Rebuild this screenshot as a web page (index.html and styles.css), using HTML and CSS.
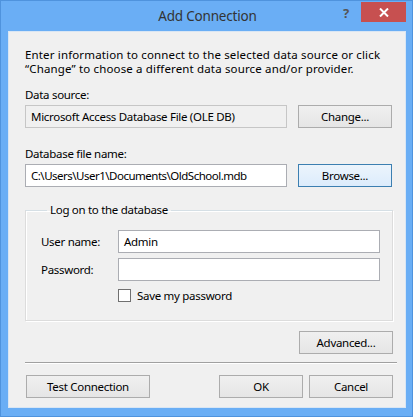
FILE: index.html
```html
<!DOCTYPE html>
<html>
<head>
<meta charset="utf-8">
<link rel="stylesheet" href="styles.css">
</head>
<body>
<div class="window">
  <div class="titlebar">
    <div class="title">Add Connection</div>
    <div class="help">?</div>
    <div class="close"><svg width="10" height="9" viewBox="0 0 10 9"><path d="M1 0.5L9 8.5M9 0.5L1 8.5" stroke="#fff" stroke-width="2"/></svg></div>
  </div>
  <div class="client">
    <p class="intro">Enter information to connect to the selected data source or click<br>“Change” to choose a different data source and/or provider.</p>
    <div class="label">Data source:</div>
    <div class="row">
      <div class="field readonly">Microsoft Access Database File (OLE DB)</div>
      <div class="btn">Change...</div>
    </div>
    <div class="label label2">Database file name:</div>
    <div class="row">
      <div class="field path">C:\Users\User1\Documents\OldSchool.mdb</div>
      <div class="btn focus">Browse...</div>
    </div>
    <fieldset class="group">
      <legend>Log on to the database</legend>
      <div class="grow">
        <span class="glabel">User name:</span>
        <div class="gfield">Admin</div>
      </div>
      <div class="grow second">
        <span class="glabel">Password:</span>
        <div class="gfield"></div>
      </div>
      <div class="check"><span class="box"></span>Save my password</div>
    </fieldset>
    <div class="advrow"><div class="btn">Advanced...</div></div>
    <div class="sep"></div>
    <div class="bottom">
      <div class="btn test">Test Connection</div>
      <div class="right">
        <div class="btn ok">OK</div>
        <div class="btn ok">Cancel</div>
      </div>
    </div>
  </div>
</div>
</body>
</html>
```
FILE: styles.css
```css
* { box-sizing: border-box; }
html, body { margin: 0; padding: 0; }
body { font-family: "Noto Sans", "Open Sans", sans-serif; font-size: 11.5px; color: #000; letter-spacing: -0.3px; }
.window {
  width: 413px; height: 417px;
  background: #6aaef5;
  border: 1px solid #4f93dd;
  display: flex; flex-direction: column;
}
.titlebar { height: 30px; flex: none; position: relative; display: flex; justify-content: center; }
.title { font-size: 13.5px; color: #333; line-height: 31px; margin-left: 2px; letter-spacing: -0.2px; }
.help { position: absolute; left: 342px; top: 4px; font-size: 13px; line-height: 16px; font-weight: bold; color: #555; }
.close {
  position: absolute; left: 360px; top: 1px; width: 45px; height: 20px;
  background: #c75050; display: flex; align-items: center; justify-content: center;
}
.client {
  flex: 1; margin: 0 6px 8px 7px;
  background: #f0f0f0;
  padding: 16px 11px 0 16px;
  border: 1px solid #d9e6f4;
}
.intro { margin: 0; line-height: 14px; white-space: nowrap; letter-spacing: 0.15px; }
.label { margin-top: 11px; line-height: 15px; }
.label2 { margin-top: 18px; }
.row { display: flex; gap: 11px; margin-top: 3px; }
.field {
  width: 262px; height: 23px; border: 1px solid #abadb3; background: #fff;
  padding: 0 5px; line-height: 21px; white-space: nowrap; overflow: hidden;
}
.field.readonly { background: #f0f0f0; border-color: #c6c6c6; }
.field.path { letter-spacing: -0.5px; }
.btn {
  width: 94px; height: 23px; border: 1px solid #acacac;
  background: linear-gradient(#f0f0f0, #e5e5e5);
  text-align: center; line-height: 21px; white-space: nowrap;
}
.btn.focus { border-color: #3c7fb1; background: linear-gradient(#ecf4fc, #dcecfc); }
.group {
  margin: 15px 0 0 0; padding: 12px 12px 18px 15px;
  width: 368px; min-width: 0;
  border: 1px solid #dcdcdc; border-top-color: #d5dfe5;
  box-shadow: inset 1px 1px 0 #fff, 1px 1px 0 #fff;
}
.group legend { padding: 0 3px; margin-left: 6px; line-height: 16px; }
.grow { display: flex; align-items: center; }
.grow.second { margin-top: 5px; }
.glabel { width: 77px; flex: none; }
.gfield { width: 262px; height: 23px; border: 1px solid #abadb3; background: #fff; padding: 0 5px; line-height: 21px; }
.check { display: flex; align-items: center; margin-left: 77px; margin-top: 8px; height: 13px; line-height: 13px; }
.box { width: 13px; height: 13px; border: 1px solid #707070; background: #fff; margin-right: 6px; flex: none; }
.advrow { display: flex; justify-content: flex-end; margin-top: 10px; width: 368px; }
.sep { height: 2px; border-top: 1px solid #a0a0a0; border-bottom: 1px solid #fff; margin-top: 8px; width: 372px; }
.bottom { display: flex; justify-content: space-between; margin-top: 11px; padding-left: 1px; width: 368px; }
.right { display: flex; gap: 6px; }
.btn.test { width: 124px; }
.btn.ok { width: 84px; }
```
